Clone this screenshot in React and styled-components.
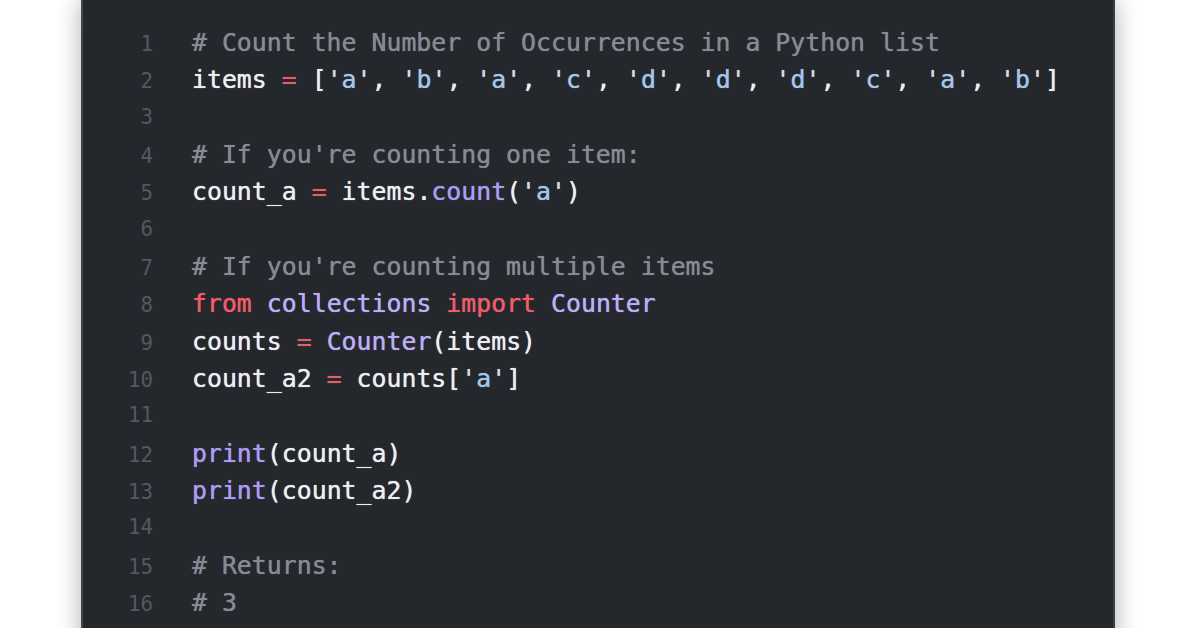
import styled, { createGlobalStyle } from "styled-components";

const GlobalStyle = createGlobalStyle`
  html, body {
    margin: 0;
    padding: 0;
    background: #ffffff;
    height: 628px;
    overflow: hidden;
  }
`;

const Page = styled.main`
  display: flex;
  justify-content: center;
  height: 628px;
  overflow: hidden;
`;

const Window = styled.section`
  width: 1034px;
  min-height: 680px;
  box-sizing: border-box;
  background: #24272c;
  border-left: 2px solid #44484e;
  border-right: 2px solid #3a3e44;
  box-shadow: 0 0 22px rgba(0, 0, 0, 0.32);
  padding-top: 24px;
  font-family: "DejaVu Sans Mono", "Liberation Mono", monospace;
`;

const Row = styled.div`
  display: flex;
  align-items: baseline;
  height: 37.35px;
  line-height: 37.35px;
`;

const LineNo = styled.span`
  width: 70px;
  flex: none;
  text-align: right;
  font-size: 20.8px;
  color: #535961;
`;

const Code = styled.code`
  margin-left: 39px;
  font-family: inherit;
  font-size: 24.85px;
  color: #eceef1;
  white-space: pre;
  text-shadow: 0 0 0.8px currentColor;
`;

const colors = {
  comment: "#858b94",
  op: "#e2606b",
  str: "#a3c6ea",
  quote: "#d4d9df",
  kw: "#ee5d69",
  name: "#bcaef6",
  fn: "#ab9cf2",
};

const Tok = styled.span`
  color: ${({ $k }) => colors[$k] || "inherit"};
`;

const S = ({ v }) => (
  <>
    <Tok $k="quote">'</Tok>
    <Tok $k="str">{v}</Tok>
    <Tok $k="quote">'</Tok>
  </>
);

const list = ["a", "b", "a", "c", "d", "d", "d", "c", "a", "b"];

const lines = [
  <Tok $k="comment"># Count the Number of Occurrences in a Python list</Tok>,
  <>
    items <Tok $k="op">=</Tok> [
    {list.map((v, i) => (
      <span key={i}>
        <S v={v} />
        {i < list.length - 1 ? ", " : ""}
      </span>
    ))}
    ]
  </>,
  null,
  <Tok $k="comment"># If you're counting one item:</Tok>,
  <>
    count_a <Tok $k="op">=</Tok> items.<Tok $k="fn">count</Tok>(<S v="a" />)
  </>,
  null,
  <Tok $k="comment"># If you're counting multiple items</Tok>,
  <>
    <Tok $k="kw">from</Tok> <Tok $k="name">collections</Tok> <Tok $k="kw">import</Tok>{" "}
    <Tok $k="name">Counter</Tok>
  </>,
  <>
    counts <Tok $k="op">=</Tok> <Tok $k="name">Counter</Tok>(items)
  </>,
  <>
    count_a2 <Tok $k="op">=</Tok> counts[<S v="a" />]
  </>,
  null,
  <>
    <Tok $k="fn">print</Tok>(count_a)
  </>,
  <>
    <Tok $k="fn">print</Tok>(count_a2)
  </>,
  null,
  <Tok $k="comment"># Returns:</Tok>,
  <Tok $k="comment"># 3</Tok>,
];

export default function App() {
  return (
    <>
      <GlobalStyle />
      <Page>
        <Window>
          {lines.map((content, i) => (
            <Row key={i}>
              <LineNo>{i + 1}</LineNo>
              <Code>{content}</Code>
            </Row>
          ))}
        </Window>
      </Page>
    </>
  );
}
